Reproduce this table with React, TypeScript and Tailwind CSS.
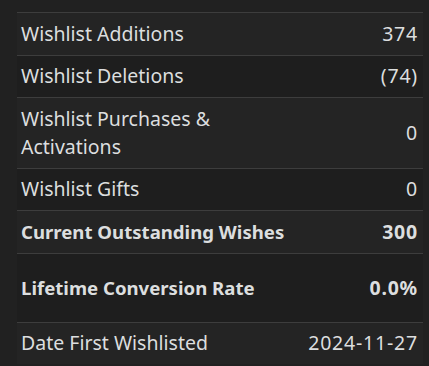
const ROWS: { label: string; value: string; bold?: boolean; tall?: boolean }[] = [
  { label: "Wishlist Additions", value: "374" },
  { label: "Wishlist Deletions", value: "(74)" },
  { label: "Wishlist Purchases & Activations", value: "0" },
  { label: "Wishlist Gifts", value: "0" },
  { label: "Current Outstanding Wishes", value: "300", bold: true },
  { label: "Lifetime Conversion Rate", value: "0.0%", bold: true, tall: true },
  { label: "Date First Wishlisted", value: "2024-11-27" },
];

export default function App() {
  return (
    <div className="min-h-screen bg-[#212121] pt-3 pl-[17px] pr-[6px] font-['Noto_Sans',sans-serif] text-[19.5px] leading-[28px] text-[#dcdedf]">
      <table className="w-full table-fixed border-collapse">
        <colgroup>
          <col className="w-[215px]" />
          <col />
        </colgroup>
        <tbody>
          {ROWS.map((r, i) => (
            <tr key={r.label} className={`border-t border-[#3d3d3d] ${i % 2 === 1 ? "bg-[#1e1e1e]" : "bg-[#242424]"}`}>
              <td className={`pl-1 pr-2 ${r.tall ? "py-[20px]" : "py-[6.75px]"} ${r.bold ? "font-bold whitespace-nowrap text-[18.6px]" : ""}`}>{r.label}</td>
              <td className={`pr-[5px] text-right tracking-[0.8px] ${r.bold ? "font-bold" : ""}`}>{r.value}</td>
            </tr>
          ))}
        </tbody>
      </table>
    </div>
  );
}
